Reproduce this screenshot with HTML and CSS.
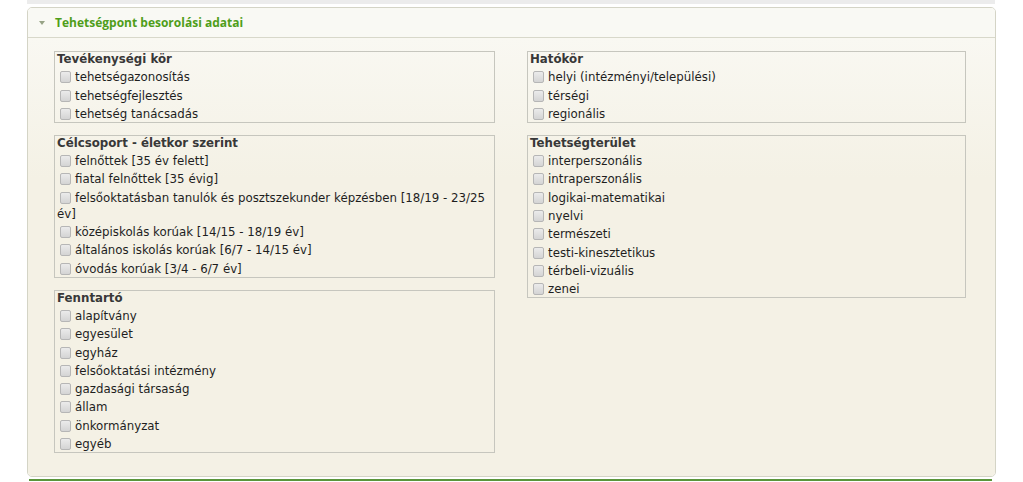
FILE: index.html
```html
<!DOCTYPE html>
<html lang="hu">
<head>
<meta charset="utf-8">
<title>Tehetségpont besorolási adatai</title>
<link rel="stylesheet" href="styles.css">
</head>
<body>
<div class="strip"></div>
<section class="panel">
  <header class="panel-head">
    <span class="caret"></span>
    <h2 class="panel-title">Tehetségpont besorolási adatai</h2>
  </header>
  <div class="panel-body">
    <div class="col">
      <div class="group">
        <div class="group-title">Tevékenységi kör</div>
        <label class="opt"><input type="checkbox" class="cb">tehetségazonosítás</label>
        <label class="opt"><input type="checkbox" class="cb">tehetségfejlesztés</label>
        <label class="opt"><input type="checkbox" class="cb">tehetség tanácsadás</label>
      </div>
      <div class="group">
        <div class="group-title">Célcsoport - életkor szerint</div>
        <label class="opt"><input type="checkbox" class="cb">felnőttek [35 év felett]</label>
        <label class="opt"><input type="checkbox" class="cb">fiatal felnőttek [35 évig]</label>
        <label class="opt"><input type="checkbox" class="cb">felsőoktatásban tanulók és posztszekunder képzésben [18/19 - 23/25 év]</label>
        <label class="opt"><input type="checkbox" class="cb">középiskolás korúak [14/15 - 18/19 év]</label>
        <label class="opt"><input type="checkbox" class="cb">általános iskolás korúak [6/7 - 14/15 év]</label>
        <label class="opt"><input type="checkbox" class="cb">óvodás korúak [3/4 - 6/7 év]</label>
      </div>
      <div class="group">
        <div class="group-title">Fenntartó</div>
        <label class="opt"><input type="checkbox" class="cb">alapítvány</label>
        <label class="opt"><input type="checkbox" class="cb">egyesület</label>
        <label class="opt"><input type="checkbox" class="cb">egyház</label>
        <label class="opt"><input type="checkbox" class="cb">felsőoktatási intézmény</label>
        <label class="opt"><input type="checkbox" class="cb">gazdasági társaság</label>
        <label class="opt"><input type="checkbox" class="cb">állam</label>
        <label class="opt"><input type="checkbox" class="cb">önkormányzat</label>
        <label class="opt"><input type="checkbox" class="cb">egyéb</label>
      </div>
    </div>
    <div class="col">
      <div class="group">
        <div class="group-title">Hatókör</div>
        <label class="opt"><input type="checkbox" class="cb">helyi (intézményi/települési)</label>
        <label class="opt"><input type="checkbox" class="cb">térségi</label>
        <label class="opt"><input type="checkbox" class="cb">regionális</label>
      </div>
      <div class="group">
        <div class="group-title">Tehetségterület</div>
        <label class="opt"><input type="checkbox" class="cb">interperszonális</label>
        <label class="opt"><input type="checkbox" class="cb">intraperszonális</label>
        <label class="opt"><input type="checkbox" class="cb">logikai-matematikai</label>
        <label class="opt"><input type="checkbox" class="cb">nyelvi</label>
        <label class="opt"><input type="checkbox" class="cb">természeti</label>
        <label class="opt"><input type="checkbox" class="cb">testi-kinesztetikus</label>
        <label class="opt"><input type="checkbox" class="cb">térbeli-vizuális</label>
        <label class="opt"><input type="checkbox" class="cb">zenei</label>
      </div>
    </div>
  </div>
</section>
<div class="next-panel"></div>
</body>
</html>
```
FILE: styles.css
```css
html, body {
  margin: 0;
  padding: 0;
  background: #ffffff;
}
body {
  font-family: "DejaVu Sans", Verdana, sans-serif;
  font-size: 11.8px;
  color: #222222;
  overflow: hidden;
}
.strip {
  height: 4px;
  width: 968px;
  margin-left: 27px;
  background: #ececec;
}
.panel {
  box-sizing: border-box;
  width: 969px;
  margin: 3px 0 0 27px;
  border: 1px solid #d4d4c6;
  border-radius: 5px;
  overflow: hidden;
}
.panel-head {
  height: 29px;
  display: flex;
  align-items: center;
  padding-left: 11px;
  background: #f9f9f4;
  border-bottom: 1px solid #d8d8ca;
}
.caret {
  width: 0;
  height: 0;
  border-left: 3px solid transparent;
  border-right: 3px solid transparent;
  border-top: 4px solid #97a386;
  margin-right: 10px;
}
.panel-title {
  margin: 0;
  font-family: "Open Sans", "DejaVu Sans", sans-serif;
  font-weight: bold;
  font-size: 12px;
  color: #4f9e1a;
}
.panel-body {
  display: grid;
  grid-template-columns: 441px 439px;
  column-gap: 32px;
  align-items: start;
  padding: 13px 0 23px 26px;
  background: linear-gradient(#f9f8f2, #f4f1e5 140px);
}
.col {
  display: flex;
  flex-direction: column;
  gap: 12px;
}
.group {
  border: 1px solid #c6c6be;
  padding: 0 0 0 2px;
}
.group-title {
  font-weight: bold;
  line-height: 15px;
  color: #383838;
}
.opt {
  display: block;
  line-height: 16px;
  padding-top: 2.3px;
  color: #1e1e1e;
}
.cb {
  appearance: none;
  -webkit-appearance: none;
  box-sizing: border-box;
  width: 11px;
  height: 12px;
  margin: 0 4px 0 3px;
  vertical-align: -2px;
  border: 1px solid #b6b6b6;
  border-radius: 2px;
  background: linear-gradient(#ebebeb, #d4d4d4);
}
.next-panel {
  height: 2px;
  width: 963px;
  margin: 2px 0 0 29px;
  background: #5a953a;
}
```
